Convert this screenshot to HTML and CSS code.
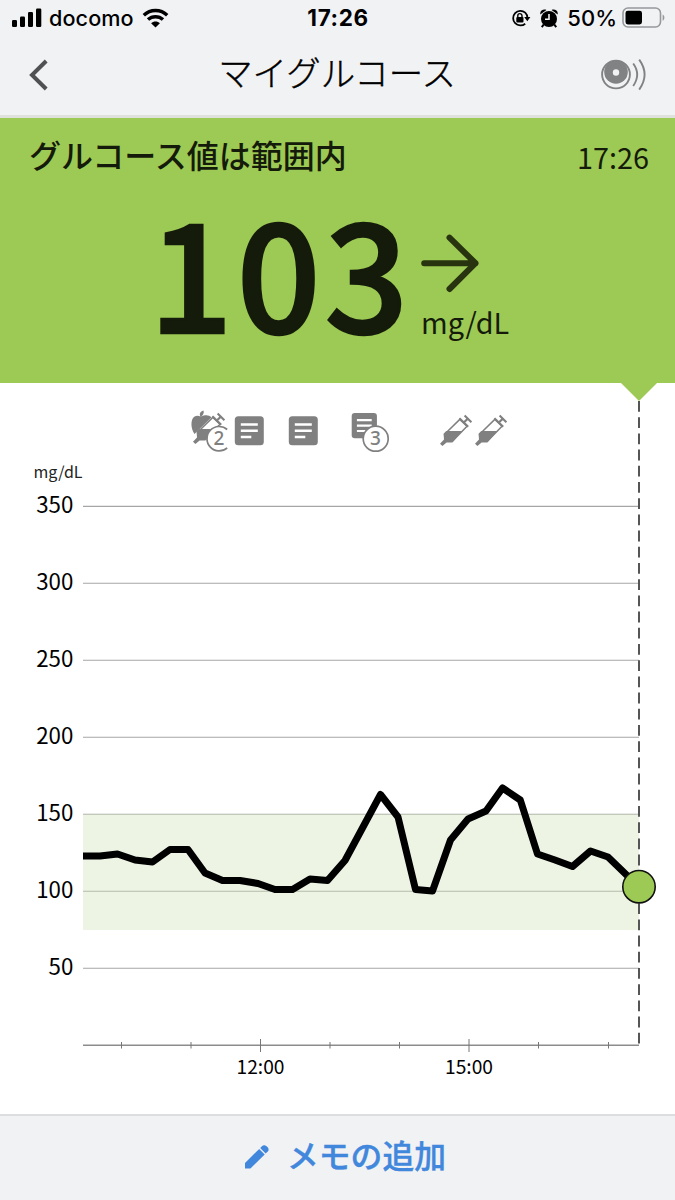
FILE: index.html
```html
<!DOCTYPE html>
<html lang="ja">

<head>
    <meta charset="UTF-8">
    <meta name="viewport" content="width=device-width, initial-scale=1.0">
    <title>マイグルコース</title>
    <link rel="stylesheet" href="styles.css">
</head>

<body>
    <div class="status-bar">
        <div class="status-left">
            <svg class="signal" width="30" height="20" viewBox="0 0 30 20">
                <rect x="0" y="12" width="5" height="7" rx="1.2" />
                <rect x="8" y="8.5" width="5" height="10.5" rx="1.2" />
                <rect x="16" y="4" width="5" height="15" rx="1.2" />
                <rect x="24" y="0.5" width="5.3" height="18.5" rx="1.2" />
            </svg>
            <span class="carrier">docomo</span>
            <svg width="27" height="20" viewBox="0 0 27 20">
                <path class="wifi-arc" d="M1.8 7.2C8.3 .9 18.7 .9 25.2 7.2" />
                <path class="wifi-arc" d="M6 11.6C10.2 7.7 16.8 7.7 21 11.6" />
                <path d="M9.1 15.2C11.5 13 15.5 13 17.9 15.2L13.5 19.6Z" />
            </svg>
        </div>
        <div class="status-time">17:26</div>
        <div class="status-right">
            <svg width="20" height="18" viewBox="0 0 20 18">
                <path class="lock-ring" d="M14.2 3.6A7.3 7.3 0 1 0 14.2 14.7M14.2 3.6A7.3 7.3 0 0 1 16.4 8.6" />
                <path d="M13.2 8H19.4L16.3 12.2Z" />
                <rect x="5.3" y="8" width="7.2" height="5.4" rx="1" />
                <path class="lock-hook" d="M6.8 8.4V6.7a2.1 2.1 0 0 1 4.2 0V8.4" />
            </svg>
            <svg class="alarm" width="18" height="19" viewBox="0 0 18 19">
                <circle cx="9" cy="10" r="8" />
                <path d="M.3 5.4C-.3 2 3 -.2 6.4 .9ZM17.7 5.4C18.3 2 15 -.2 11.6 .9Z" />
                <path class="alarm-leg" d="M3.7 15.5L1.8 18.2M14.3 15.5L16.2 18.2" />
                <path class="alarm-hand" d="M9 5V10.2H5" />
            </svg>
            <span class="percent">50%</span>
            <svg width="43" height="22" viewBox="0 0 43 22">
                <rect class="battery-case" x="1" y="1" width="37.5" height="19" rx="5" />
                <rect x="3.5" y="3.7" width="16.5" height="13.8" rx="2.4" />
                <path class="battery-tip" d="M40.6 7.5C43 8.3 43 12.9 40.6 13.7Z" />
            </svg>
        </div>
    </div>

    <div class="header">
        <svg width="20" height="32" viewBox="0 0 20 32">
            <path class="back" d="M18.2 2L4 16L18.2 30" />
        </svg>
        <h1>マイグルコース</h1>
        <svg width="46" height="32" viewBox="0 0 46 32">
            <circle class="sensor-line" cx="15" cy="15.5" r="13.9" />
            <circle class="sensor-disc" cx="15" cy="13" r="11.8" />
            <circle class="sensor-hole" cx="15" cy="13.5" r="3.2" />
            <path class="sensor-line" d="M32.2 4.5Q40.2 15.5 32.2 27M38.2 .6Q49 15.5 38.2 30.6" />
        </svg>
    </div>

    <div class="reading">
        <div class="reading-top">
            <h2>グルコース値は範囲内</h2>
            <span class="reading-time">17:26</span>
        </div>
        <div class="reading-value">
            <span class="number">103</span>
            <div class="trend">
                <svg width="58" height="60" viewBox="0 0 58 60">
                    <path class="arrow" d="M3.2 30.2H54.5M28.5 4.7L54.5 30.2L28.5 56" />
                </svg>
                <span class="unit">mg/dL</span>
            </div>
        </div>
    </div>

    <div class="main">
        <svg class="chart" width="675" height="731" viewBox="0 383 675 731">
            <defs>
                <g id="note">
                    <rect width="29" height="29" rx="3.5" />
                    <path class="note-line" d="M6 8.2H23M6 14.5H23M6 20.7H16.5" />
                </g>
                <g id="syringe">
                    <path class="syringe-body" d="M19.8 4.4L27 11.2L12.6 26L5 26L4.6 19.2Z" />
                    <path d="M3.6 18.8L6.2 16H22.4L12.4 27.4L6.6 27.4L2.4 31L0 28.7L4 24.6Z" />
                    <path class="syringe-rod" d="M19.4 3.2L28.2 11.8M24 7.2L28.2 3.4M24.6 .4L31.4 7.2" />
                </g>
            </defs>

            <path class="grid" d="M83 506.4H639M83 583.3H639M83 660.3H639M83 737.3H639M83 814.3H639M83 891.3H639M83 968.3H639" />

            <!-- target range -->
            <rect class="range" x="83" y="814" width="556" height="116" />

            <path class="axis" d="M83 1045.2H639" />
            <path class="tick" d="M121.5 1042V1048.5M191 1042V1048.5M260.5 1039V1052M330 1042V1048.5M399.5 1042V1048.5M469 1039V1052M538.5 1042V1048.5M608.5 1042V1048.5" />

            <text class="y-unit" x="33.5" y="477.5">mg/dL</text>
            <g class="y-label">
                <text x="73.3" y="513.3">350</text>
                <text x="73.3" y="589.8">300</text>
                <text x="73.3" y="667">250</text>
                <text x="73.3" y="744.3">200</text>
                <text x="73.3" y="821.3">150</text>
                <text x="73.3" y="898.3">100</text>
                <text x="73.3" y="975.3">50</text>
            </g>
            <g class="x-label">
                <text x="260.5" y="1074.3">12:00</text>
                <text x="469" y="1074.3">15:00</text>
            </g>

            <!-- food + insulin -->
            <g class="marks">
                <path d="M200.5 416.5C199 414 200 411.5 203.5 410.5C204.4 413 203 415.6 201 416.7C205 414.5 209 414.8 211.5 417.2L194.5 434C190.5 428.5 190.5 419.5 194.2 416.8C196.5 415.3 198.7 415.8 200.5 416.5Z" />
                <use href="#syringe" x="193" y="413" />
                <path class="badge" d="M227.2 429.5A12.2 12.2 0 1 0 227.2 447.9" />
                <text class="badge-text" x="219" y="445.2">2</text>

                <use href="#note" x="234.8" y="416.3" />
                <use href="#note" x="288.8" y="416.3" />

                <g transform="translate(351.7 413) scale(.87)">
                    <use href="#note" />
                </g>
                <circle class="badge" cx="375.7" cy="438.7" r="12.5" />
                <text class="badge-text" x="375.5" y="445.4">3</text>

                <use href="#syringe" x="440" y="415" />
                <use href="#syringe" x="475" y="415" />
            </g>

            <path class="now-line" d="M639 401V1044" />
            <path class="pointer" d="M621 383H657L639 401Z" />
            <polyline class="glucose" points="83,856 100,856 117.5,854 135,860 152.5,862 170,849.5 188,849.5 205,873 222.5,880.5 240,880.5 258,883.5 275,889.5 292.5,889.5 310,879 327.5,880.5 345,860.5 363,827 380.5,794.5 398,817 415.5,889.5 432.5,891 450.5,840 468,819 486,811 502.5,788 520.3,800 537.5,854 555,860 572.5,866.5 590.5,851 608,857 639,887" />
            <circle class="current" cx="639" cy="886.7" r="16.2" />
        </svg>
    </div>

    <div class="footer">
        <svg width="24" height="24" viewBox="0 0 24 24">
            <path d="M0 18L14.2 3.9L19.7 9.5L5.4 23.6H0Z" />
            <path d="M15.2 2.9L17.2 .9C20.2-1.4 25.6 3.7 22.8 6.6L20.6 8.5Z" />
        </svg>
        <span>メモの追加</span>
    </div>
</body>

</html>
```
FILE: styles.css
```css
* {
    box-sizing: border-box;
}

body {
    font-family: 'Noto Sans CJK JP', sans-serif;
    background-color: #fff;
    color: #000;
    margin: 0;
    height: 1200px;
    display: flex;
    flex-direction: column;
    overflow: hidden;
}

svg {
    display: block;
    flex: none;
}

h1,
h2 {
    margin: 0;
}

/* Status bar */
.status-bar {
    display: grid;
    grid-template-columns: 1fr auto 1fr;
    align-items: center;
    height: 36px;
    padding: 0 10px 0 12px;
    background-color: #f1f2f4;
    font-family: 'Inter', sans-serif;
    font-size: 22px;
    font-weight: 500;
    line-height: 36px;
}

.status-left,
.status-right {
    display: flex;
    align-items: center;
}

.status-left {
    gap: 8px;
}

.status-right {
    justify-content: flex-end;
    gap: 5px;
}

.carrier {
    font-size: 21.6px;
    letter-spacing: 0.1px;
    margin: 0 0 0 -1px;
}

.alarm {
    margin: 0 4px;
}

.status-time {
    font-size: 22.5px;
    font-weight: 700;
    letter-spacing: 0.6px;
    padding-right: 1px;
}

.wifi-arc {
    fill: none;
    stroke: #000;
    stroke-width: 3.4;
}

.lock-ring,
.lock-hook {
    fill: none;
    stroke: #000;
    stroke-width: 1.8;
}

.lock-hook {
    stroke-width: 1.4;
}

.alarm-leg {
    stroke: #000;
    stroke-width: 2;
}

.alarm-hand {
    fill: none;
    stroke: #f1f2f4;
    stroke-width: 1.6;
}

.battery-case {
    fill: none;
    stroke: #97989b;
    stroke-width: 1.6;
}

.battery-tip {
    fill: #97989b;
}

/* Header */
.header {
    display: flex;
    justify-content: space-between;
    align-items: center;
    height: 82px;
    padding: 0 28px 2px 28px;
    background-color: #f1f2f4;
    border-bottom: 3px solid #dfe2dc;
}

.header h1 {
    font-size: 34.4px;
    font-weight: 300;
    line-height: 50px;
    padding: 0 0 7px 25px;
    -webkit-text-stroke: 0.4px #000;
}

.back {
    fill: none;
    stroke: #505153;
    stroke-width: 4;
}

.sensor-line {
    fill: none;
    stroke: #818284;
    stroke-width: 1.9;
}

.sensor-disc {
    fill: #818284;
}

.sensor-hole {
    fill: #f1f2f4;
}

/* Current reading */
.reading {
    height: 265px;
    background-color: #9dca54;
    color: #151b0b;
}

.reading-top {
    display: flex;
    justify-content: space-between;
    padding: 12px 26px 0 29px;
    height: 71px;
}

.reading-top h2 {
    font-size: 32px;
    font-weight: 500;
    line-height: 48px;
}

.reading-time {
    font-size: 28.8px;
    line-height: 54px;
}

.reading-value {
    display: flex;
    padding-left: 149px;
}

.number {
    width: 267px;
    font-size: 147px;
    font-weight: 500;
    line-height: 160px;
    letter-spacing: 4px;
    -webkit-text-stroke: 2.4px #151b0b;
}

.trend {
    display: flex;
    flex-direction: column;
    padding: 44px 0 0 5px;
}

.arrow {
    fill: none;
    stroke: #27340f;
    stroke-width: 6;
    stroke-linecap: round;
    stroke-linejoin: round;
}

.unit {
    font-size: 28.8px;
    line-height: 58px;
}

/* Chart */
.main {
    flex: 1;
}

.range {
    fill: #cfe2b5;
    fill-opacity: 0.37;
}

.grid {
    stroke: #000;
    stroke-opacity: 0.35;
    stroke-width: 1.1;
}

.axis {
    stroke: #8c8c8c;
    stroke-width: 1.5;
}

.tick {
    stroke: #777;
    stroke-width: 1;
}

.y-unit {
    font-size: 16px;
    fill: #222;
}

.y-label {
    font-size: 22.3px;
    text-anchor: end;
}

.x-label {
    font-size: 19.2px;
    text-anchor: middle;
}

.marks {
    fill: #808080;
}

.note-line {
    stroke: #fff;
    stroke-width: 2.5;
}

.syringe-body {
    fill: #fff;
    stroke: #808080;
    stroke-width: 1.5;
}

.syringe-rod {
    fill: none;
    stroke: #808080;
    stroke-width: 2.1;
}

.badge {
    fill: #fff;
    stroke: #808080;
    stroke-width: 1.7;
}

.badge-text {
    font-family: 'Noto Sans', sans-serif;
    font-size: 19px;
    font-weight: 500;
    text-anchor: middle;
}

.now-line {
    stroke: #555;
    stroke-width: 2;
    stroke-dasharray: 10.8 5.4;
}

.pointer {
    fill: #9dca54;
}

.glucose {
    fill: none;
    stroke: #000;
    stroke-width: 7;
    stroke-linejoin: round;
}

.current {
    fill: #9dca54;
    stroke: #111;
    stroke-width: 1.6;
}

/* Footer */
.footer {
    display: flex;
    justify-content: center;
    align-items: center;
    gap: 18px;
    height: 86px;
    padding: 0 0 2px 16px;
    background-color: #f1f2f4;
    border-top: 2px solid #dcdddf;
    color: #4187dc;
    font-size: 31.8px;
    font-weight: 500;
}

.footer span {
    padding-bottom: 7px;
    -webkit-text-stroke: 0.4px #4187dc;
}

.footer svg {
    fill: #4187dc;
}
```
